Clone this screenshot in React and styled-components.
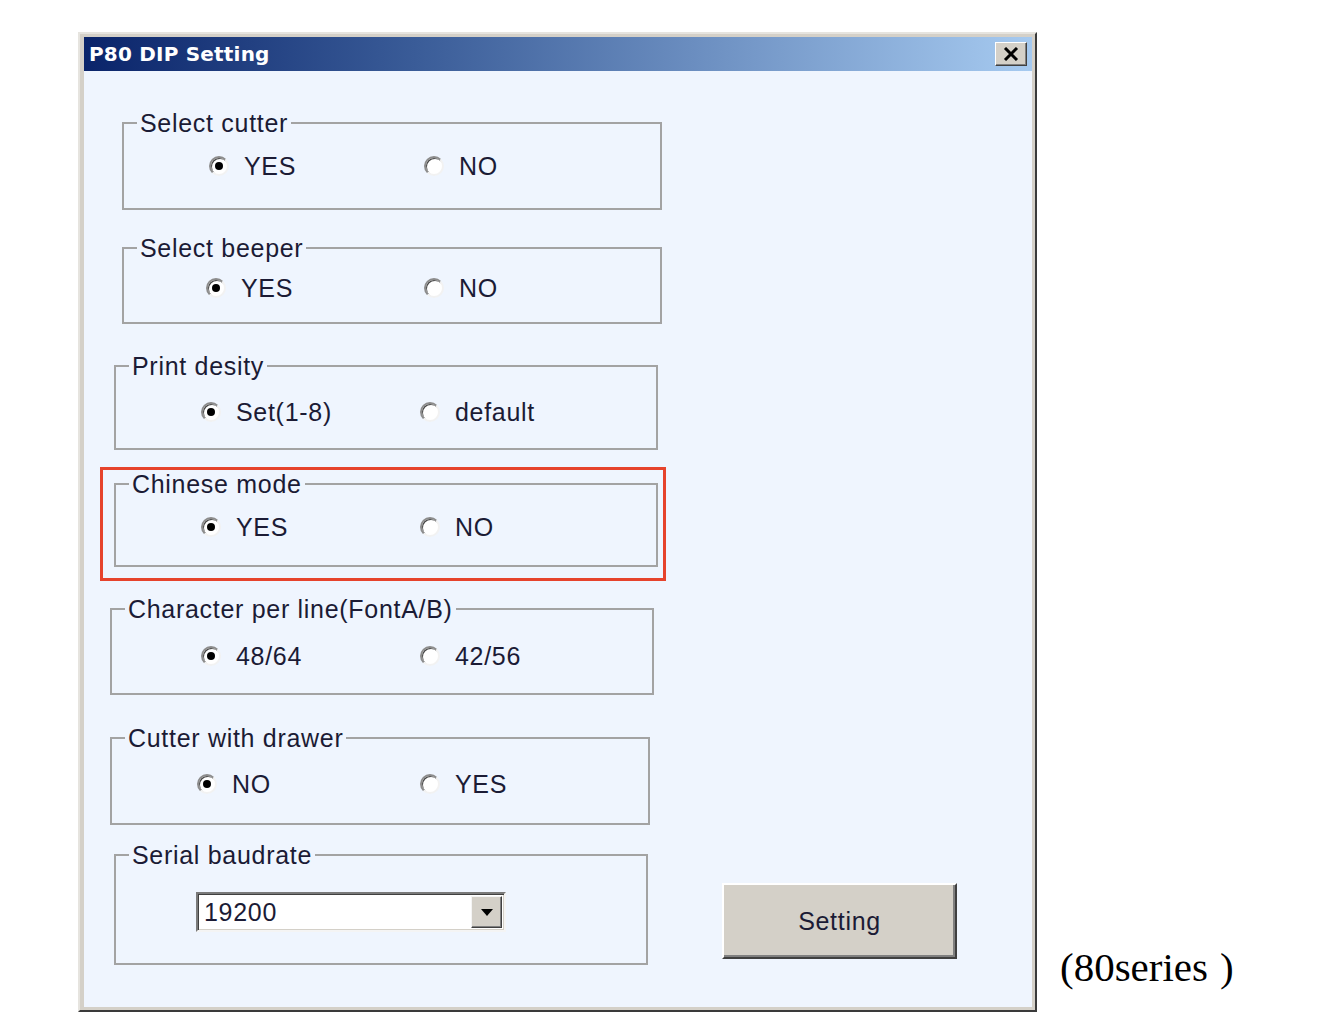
import React from 'react';
import styled, { createGlobalStyle } from 'styled-components';

const GlobalStyle = createGlobalStyle`
  html, body { margin: 0; padding: 0; background: #ffffff; }
  body { font-family: "Liberation Sans", Arial, sans-serif; }
`;

const Page = styled.div`
  display: flex;
  align-items: flex-end;
  padding: 32px 0 0 78px;
`;

const Window = styled.div`
  width: 959px;
  height: 980px;
  box-sizing: border-box;
  display: flex;
  flex-direction: column;
  background: #d4d0c8;
  border: 2px solid;
  border-color: #e6e4df #3a3a3a #3a3a3a #e6e4df;
  padding: 3px 3px 3px 4px;
  flex: none;
`;

const TitleBar = styled.div`
  height: 34px;
  flex: none;
  display: flex;
  align-items: center;
  justify-content: space-between;
  padding: 0 5px;
  background: linear-gradient(90deg, #0a246a 0%, #3a5c98 35%, #a6caf0 100%);
`;

const Title = styled.span`
  font-family: "DejaVu Sans", Verdana, sans-serif;
  font-weight: bold;
  font-size: 20px;
  letter-spacing: 0.2px;
  color: #ffffff;
`;

const CloseButton = styled.div`
  width: 32px;
  height: 24px;
  box-sizing: border-box;
  background: #d4d0c8;
  border: 1px solid;
  border-color: #ffffff #404040 #404040 #ffffff;
  box-shadow: inset -1px -1px 0 #808080;
  display: flex;
  align-items: center;
  justify-content: center;
`;

const Body = styled.div`
  flex: 1;
  background: #eff5fe;
  display: flex;
  align-items: flex-start;
`;

const Column = styled.div`
  width: 578px;
  display: flex;
  flex-direction: column;
  flex: none;
`;

const GroupWrap = styled.div`
  position: relative;
  margin-left: ${(p) => p.$ml}px;
  margin-top: ${(p) => p.$mt}px;
  width: ${(p) => p.$w}px;
`;

const Group = styled.fieldset`
  margin: 0;
  padding: 0;
  min-inline-size: 0;
  box-sizing: border-box;
  height: ${(p) => p.$h}px;
  border: 2px solid #a3a3a3;
`;

const Legend = styled.legend`
  margin-left: 13px;
  padding: 0 3px;
  font-size: 25px;
  line-height: 26px;
  letter-spacing: 0.7px;
  color: #1b1b35;
`;

const Content = styled.div`
  padding-left: ${(p) => p.$pl}px;
  margin-top: ${(p) => p.$mt}px;
  display: flex;
  align-items: center;
  height: ${(p) => p.$h || 26}px;
`;

const Option = styled.label`
  display: inline-flex;
  align-items: center;
  gap: 15px;
  width: ${(p) => (p.$w ? `${p.$w}px` : 'auto')};
  flex: none;
  font-size: 25px;
  line-height: 26px;
  letter-spacing: 0.7px;
  color: #1b1b35;
`;

const Radio = styled.span`
  width: 20px;
  height: 20px;
  flex: none;
  box-sizing: border-box;
  border-radius: 50%;
  background: #ffffff;
  border: 2px solid;
  border-color: #8c8c8c #f2f2f2 #f2f2f2 #8c8c8c;
  box-shadow: inset 1px 1px 0 #4a4a4a;
  display: flex;
  align-items: center;
  justify-content: center;

  &::after {
    content: '';
    width: 8px;
    height: 8px;
    border-radius: 50%;
    background: #000000;
    display: ${(p) => (p.$checked ? 'block' : 'none')};
  }
`;

const Combo = styled.div`
  width: 310px;
  height: 40px;
  box-sizing: border-box;
  display: flex;
  align-items: stretch;
  background: #ffffff;
  border: 2px solid;
  border-color: #7a7a7a #f4f4f4 #f4f4f4 #7a7a7a;
  box-shadow: inset 1px 1px 0 #404040, inset -1px -1px 0 #d4d0c8;
  padding: 2px;
`;

const ComboText = styled.span`
  flex: 1;
  padding-left: 4px;
  display: flex;
  align-items: center;
  font-size: 25px;
  letter-spacing: 0.7px;
  color: #1b1b35;
`;

const DropButton = styled.span`
  width: 31px;
  flex: none;
  box-sizing: border-box;
  background: #d4d0c8;
  border: 1px solid;
  border-color: #f4f4f4 #404040 #404040 #f4f4f4;
  box-shadow: inset -1px -1px 0 #808080;
  display: flex;
  align-items: center;
  justify-content: center;
`;

const SettingButton = styled.div`
  width: 235px;
  height: 76px;
  box-sizing: border-box;
  flex: none;
  align-self: flex-end;
  margin: 0 0 48px 60px;
  background: #d4d0c8;
  border: 2px solid;
  border-color: #ffffff #404040 #404040 #ffffff;
  box-shadow: inset -2px -2px 0 #808080;
  display: flex;
  align-items: center;
  justify-content: center;
  font-size: 25px;
  letter-spacing: 0.7px;
  color: #1b1b35;
`;

const Highlight = styled.div`
  position: absolute;
  left: -14px;
  top: -4px;
  right: -8px;
  bottom: -14px;
  border: 3px solid #e6432c;
  pointer-events: none;
`;

const Caption = styled.div`
  font-family: "Liberation Serif", "Times New Roman", serif;
  font-size: 41px;
  line-height: 41px;
  color: #000000;
  margin: 0 0 24px 23px;
  white-space: nowrap;
`;

const CloseParen = styled.span`
  margin-left: 12px;
`;

const groups = [
  { title: 'Select cutter', ml: 38, mt: 39, w: 540, h: 100, pl: 85, rmt: 17, ow: 215, opts: ['YES', 'NO'] },
  { title: 'Select beeper', ml: 38, mt: 25, w: 540, h: 89, pl: 82, rmt: 14, ow: 218, opts: ['YES', 'NO'] },
  { title: 'Print desity', ml: 30, mt: 29, w: 544, h: 97, pl: 85, rmt: 20, ow: 219, opts: ['Set(1-8)', 'default'] },
  { title: 'Chinese mode', ml: 30, mt: 21, w: 544, h: 96, pl: 85, rmt: 17, ow: 219, opts: ['YES', 'NO'], highlight: true },
  { title: 'Character per line(FontA/B)', ml: 26, mt: 29, w: 544, h: 99, pl: 89, rmt: 21, ow: 219, opts: ['48/64', '42/56'] },
  { title: 'Cutter with drawer', ml: 26, mt: 30, w: 540, h: 100, pl: 85, rmt: 20, ow: 223, opts: ['NO', 'YES'] },
];

export default function App() {
  return (
    <>
      <GlobalStyle />
      <Page>
        <Window>
          <TitleBar>
            <Title>P80 DIP Setting</Title>
            <CloseButton>
              <svg width="16" height="14" viewBox="0 0 16 14">
                <path d="M2 1 L14 13 M14 1 L2 13" stroke="#000" strokeWidth="3" fill="none" />
              </svg>
            </CloseButton>
          </TitleBar>
          <Body>
            <Column>
              {groups.map((g) => (
                <GroupWrap key={g.title} $ml={g.ml} $mt={g.mt} $w={g.w}>
                  <Group $h={g.h}>
                    <Legend>{g.title}</Legend>
                    <Content $pl={g.pl} $mt={g.rmt}>
                      <Option $w={g.ow}>
                        <Radio $checked />
                        {g.opts[0]}
                      </Option>
                      <Option>
                        <Radio />
                        {g.opts[1]}
                      </Option>
                    </Content>
                  </Group>
                  {g.highlight && <Highlight />}
                </GroupWrap>
              ))}
              <GroupWrap $ml={30} $mt={17} $w={534}>
                <Group $h={123}>
                  <Legend>Serial baudrate</Legend>
                  <Content $pl={80} $mt={24} $h={40}>
                    <Combo>
                      <ComboText>19200</ComboText>
                      <DropButton>
                        <svg width="12" height="7" viewBox="0 0 12 7">
                          <path d="M0 0 H12 L6 7 Z" fill="#000" />
                        </svg>
                      </DropButton>
                    </Combo>
                  </Content>
                </Group>
              </GroupWrap>
            </Column>
            <SettingButton>Setting</SettingButton>
          </Body>
        </Window>
        <Caption>
          (80series<CloseParen>)</CloseParen>
        </Caption>
      </Page>
    </>
  );
}
